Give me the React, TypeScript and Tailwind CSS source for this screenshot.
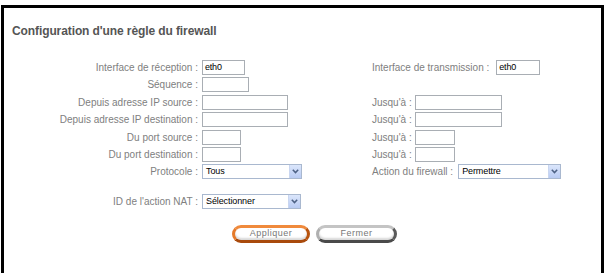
import React from "react";

const font = { fontFamily: '"Liberation Sans", Arial, sans-serif' };

function TextInput({ w, value }: { w: string; value?: string }) {
  return (
    <div
      className={`${w} h-[15px] border border-[#a9aeb4] bg-white text-[9px] leading-[13px] text-black pl-[2px] tracking-[-0.2px]`}
    >
      {value}
    </div>
  );
}

function Select({ w, value }: { w: string; value: string }) {
  return (
    <div className={`${w} h-[15px] border border-[#a9b8cf] bg-white flex items-center`}>
      <div className="flex-1 text-[9px] leading-[13px] text-black pl-[3px] tracking-[-0.1px]">{value}</div>
      <div className="w-[12px] h-[13px] bg-gradient-to-b from-[#dbe6fb] to-[#b9cbf3] border-l border-[#c9d6f0] flex items-center justify-center">
        <svg width="7" height="5" viewBox="0 0 7 5">
          <path d="M0.8 0.8 L3.5 3.6 L6.2 0.8" fill="none" stroke="#4d6185" strokeWidth="1.5" />
        </svg>
      </div>
    </div>
  );
}

function Label({ children }: { children: React.ReactNode }) {
  return (
    <div className="h-[15px] leading-[15px] text-[10px] text-[#808080] text-right pr-[4px] whitespace-nowrap">
      {children}
    </div>
  );
}

function RLabel({ children }: { children: React.ReactNode }) {
  return (
    <div className="h-[15px] leading-[15px] text-[10px] text-[#808080] pr-[3px] whitespace-nowrap">
      {children}
    </div>
  );
}

function Row({
  h,
  label,
  input,
  right,
}: {
  h: string;
  label: React.ReactNode;
  input: React.ReactNode;
  right?: React.ReactNode;
}) {
  return (
    <div className={`grid grid-cols-[198px_170px_1fr] items-start ${h}`}>
      <Label>{label}</Label>
      <div>{input}</div>
      <div className="flex items-start">{right}</div>
    </div>
  );
}

export default function App() {
  return (
    <div className="w-[607px] h-[273px] bg-white overflow-hidden" style={font}>
      <div className="ml-[1px] mt-[5px] w-[603px] h-[268px] border-l-[3px] border-t-[3px] border-r-[3px] border-black pt-[16px]">
        <div className="pl-[8px] text-[12px] leading-[14px] font-bold text-[#555555] tracking-[-0.1px]">
          Configuration d'une règle du firewall
        </div>
        <div className="mt-[22px]">
          <Row
            h="h-[17px]"
            label="Interface de réception :"
            input={<TextInput w="w-[43px]" value="eth0" />}
            right={
              <>
                <RLabel>Interface de transmission :</RLabel>
                <div className="ml-[4px]">
                  <TextInput w="w-[44px]" value="eth0" />
                </div>
              </>
            }
          />
          <Row h="h-[18px]" label="Séquence :" input={<TextInput w="w-[47px]" />} />
          <Row
            h="h-[17px]"
            label="Depuis adresse IP source :"
            input={<TextInput w="w-[86px]" />}
            right={
              <>
                <RLabel>Jusqu'à :</RLabel>
                <TextInput w="w-[87px]" />
              </>
            }
          />
          <Row
            h="h-[18px]"
            label="Depuis adresse IP destination :"
            input={<TextInput w="w-[86px]" />}
            right={
              <>
                <RLabel>Jusqu'à :</RLabel>
                <TextInput w="w-[87px]" />
              </>
            }
          />
          <Row
            h="h-[17px]"
            label="Du port source :"
            input={<TextInput w="w-[39px]" />}
            right={
              <>
                <RLabel>Jusqu'à :</RLabel>
                <TextInput w="w-[40px]" />
              </>
            }
          />
          <Row
            h="h-[17px]"
            label="Du port destination :"
            input={<TextInput w="w-[39px]" />}
            right={
              <>
                <RLabel>Jusqu'à :</RLabel>
                <TextInput w="w-[40px]" />
              </>
            }
          />
          <Row
            h="h-[17px]"
            label="Protocole :"
            input={<Select w="w-[100px]" value="Tous" />}
            right={
              <>
                <RLabel>Action du firewall :</RLabel>
                <div className="ml-[2px]">
                  <Select w="w-[103px]" value="Permettre" />
                </div>
              </>
            }
          />
          <div className="mt-[13px]">
            <Row
              h="h-[15px]"
              label="ID de l'action NAT :"
              input={<Select w="w-[99px]" value="Sélectionner" />}
            />
          </div>
          <div className="mt-[16px] pl-[228px] flex gap-[6px]">
            <div className="w-[78px] h-[18px] rounded-full border-[3px] border-t-[#f08a3c] border-l-[#e57a2a] border-r-[#b8540f] border-b-[#a94a0c] bg-white flex items-center justify-center text-[9px] text-[#777] tracking-[0.5px] shadow-[inset_0_-2px_2px_#d8d8d8]">
              Appliquer
            </div>
            <div className="w-[81px] h-[18px] rounded-full border-[3px] border-t-[#c4c4c4] border-l-[#b0b0b0] border-r-[#5a5a5a] border-b-[#4a4a4a] bg-white flex items-center justify-center text-[9px] text-[#777] tracking-[0.5px] shadow-[inset_0_-2px_2px_#d8d8d8]">
              Fermer
            </div>
          </div>
        </div>
      </div>
    </div>
  );
}
